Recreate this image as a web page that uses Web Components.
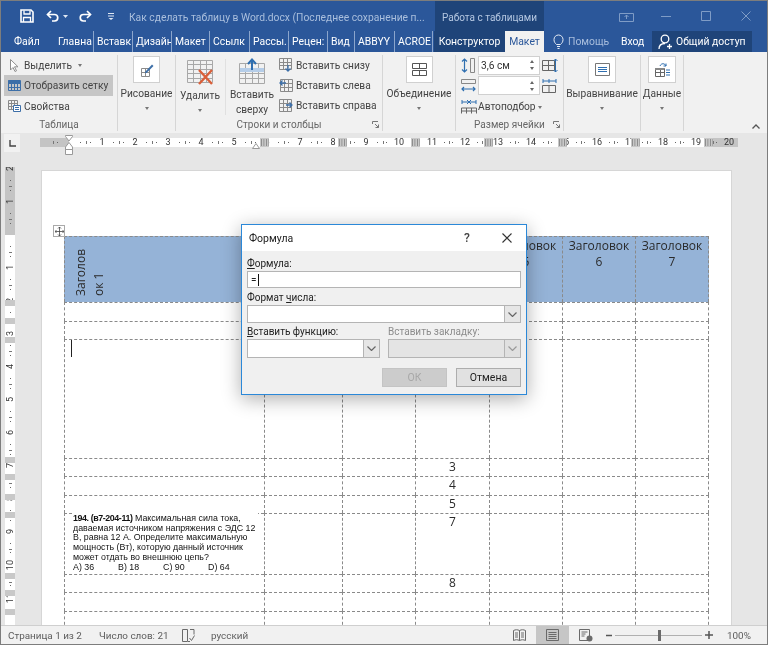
<!DOCTYPE html>
<html lang="ru">
<head>
<meta charset="utf-8">
<title>Формула</title>
<style>
  html, body { margin: 0; padding: 0; background: #e6e6e6; }
  body { width: 768px; height: 645px; overflow: hidden; font-family: Roboto, "Liberation Sans", sans-serif; }
</style>
</head>
<body>
<word-app>
  <title-bar></title-bar>
  <tab-strip></tab-strip>
  <ribbon-bar></ribbon-bar>
  <h-ruler></h-ruler>
  <doc-view></doc-view>
  <status-bar></status-bar>
  <formula-dialog slot="over"></formula-dialog>
</word-app>

<script>
// общий помощник для иконок
const svg = (w, h, body) => `<svg width="${w}" height="${h}" viewBox="0 0 ${w} ${h}" fill="none" style="display:block">${body}</svg>`;

// таблица-сетка для иконок ленты
const gridLines = (x, y, w, h, cols, rows, color) => {
  let d = `M${x}.5 ${y}.5h${w}v${h}h${-w}z`;
  for (let i = 1; i < cols; i++) d += `M${x + Math.round(w * i / cols)}.5 ${y}v${h}`;
  for (let i = 1; i < rows; i++) d += `M${x} ${y + Math.round(h * i / rows)}.5h${w}`;
  return `<path d="${d}" stroke="${color}"/>`;
};

class WordApp extends HTMLElement {
  constructor() {
    super();
    this.attachShadow({ mode: 'open' });
  }
  connectedCallback() {
    this.shadowRoot.innerHTML = `
      <style>
        :host {
          display: flex;
          flex-direction: column;
          position: relative;
          width: 768px;
          height: 645px;
          box-sizing: border-box;
          border: 1px solid #7d7d7d;
          overflow: hidden;
          background: #e6e6e6;
          filter: blur(.4px);
        }
      </style>
      <slot></slot>
      <slot name="over"></slot>
    `;
  }
}

class TitleBar extends HTMLElement {
  constructor() {
    super();
    this.attachShadow({ mode: 'open' });
  }
  connectedCallback() {
    const dim = '#7f9cc6';
    this.shadowRoot.innerHTML = `
      <style>
        :host {
          display: flex;
          height: 30px;
          background: #2b579a;
          color: #aabfdd;
          font-size: 10.300px;
        }
        .qat { display: flex; align-items: center; width: 128px; padding-left: 19px; box-sizing: border-box; flex: none; }
        .doc { width: 306px; flex: none; line-height: 34px; white-space: nowrap; }
        .ctx { width: 109px; flex: none; background: #1f4479; line-height: 34px; text-align: center; color: #b5c7e1; font-size: 10px; }
        .win { display: flex; flex: 1; align-items: center; padding-top: 0; }
        .win span { display: flex; justify-content: center; width: 40px; }
        .win span:first-child { margin-left: 62px; }
      </style>
      <div class="qat">
        ${svg(14, 14, `<path d="M1 1h10l2 2v10H1z" stroke="#fff" stroke-width="1.6"/><path d="M4 1.5v3.500h6V1.500" stroke="#fff" stroke-width="1.3"/><path d="M3.500 13V8.500h7V13" stroke="#fff" stroke-width="1.3"/>`)}
        <span style="width:12px"></span>
        ${svg(14, 12, `<path d="M5 1L1.500 4.500 5 8" stroke="#fff" stroke-width="1.700"/><path d="M2 4.500h6.500a3 3 0 0 1 0 6.500H6" stroke="#fff" stroke-width="1.700"/>`)}
        <span style="width:3px"></span>
        ${svg(5, 3, `<path d="M0 0h5L2.500 3z" fill="#dfe7f3"/>`)}
        <span style="width:10px"></span>
        ${svg(14, 12, `<path d="M9 1l3.500 3.500L9 8" stroke="#fff" stroke-width="1.700"/><path d="M12 4.500H5.500a3 3 0 0 0 0 6.500H8" stroke="#fff" stroke-width="1.700"/>`)}
        <span style="width:16px"></span>
        ${svg(6, 7, `<path d="M0 .5h6M0 3h6" stroke="#dfe7f3"/><path d="M.5 5h5L3 7z" fill="#dfe7f3"/>`)}
      </div>
      <div class="doc">Как сделать таблицу в Word.docx (Последнее сохранение п...</div>
      <div class="ctx">Работа с таблицами</div>
      <div class="win">
        <span>${svg(15, 11, `<path d="M.5 2.500h14v8H.5z" stroke="${dim}"/><path d="M7.500 8V4M5.500 6l2-2 2 2" stroke="${dim}"/>`)}</span>
        <span>${svg(10, 10, `<path d="M0 5.500h10" stroke="${dim}"/>`)}</span>
        <span>${svg(10, 10, `<path d="M.5.500h9v9h-9z" stroke="${dim}"/>`)}</span>
        <span>${svg(10, 10, `<path d="M.5.500l9 9M9.500.500l-9 9" stroke="${dim}"/>`)}</span>
      </div>
    `;
  }
}

class TabStrip extends HTMLElement {
  constructor() {
    super();
    this.attachShadow({ mode: 'open' });
  }
  connectedCallback() {
    // подпись и ширина вкладки (до правого разделителя)
    const tabs = [['Главна', 39], ['Вставк', 39], ['Дизайн', 39], ['Макет', 38], ['Ссылк', 40], ['Рассы.', 39], ['Рецен:', 39], ['Вид', 27], ['ABBYY', 40], ['ACROE', 38]];
    this.shadowRoot.innerHTML = `
      <style>
        :host {
          display: flex;
          height: 21px;
          background: #2b579a;
          color: #fff;
          font-size: 10.400px;
          line-height: 21px;
        }
        div { white-space: nowrap; overflow: hidden; flex: none; box-sizing: border-box; }
        .file { width: 54px; padding-left: 13px; }
        .tab { padding-left: 3px; border-right: 1px solid #8ba5cc; }
        .ctx { width: 71px; background: #1f4479; text-align: center; margin-left: 1px; }
        .active { width: 39px; background: #f1f1f1; color: #2b579a; text-align: center; }
        .help { display: flex; align-items: center; width: 77px; padding-left: 9px; gap: 4px; color: #a9bedd; }
        .login { width: 32px; }
        .share { display: flex; align-items: center; gap: 2px; width: 100px; background: #1f4479; padding-left: 6px; margin-left: -1px; }
      </style>
      <div class="file">Файл</div>
      ${tabs.map(([t, w]) => `<div class="tab" style="width:${w}px">${t}</div>`).join('')}
      <div class="ctx">Конструктор</div>
      <div class="active">Макет</div>
      <div class="help">${svg(11, 15, `<path d="M3.500 10.500C2 9 1 8 1 5.500a4.500 4.500 0 0 1 9 0c0 2.500-1 3.500-2.500 5zM4 12.500h3M4.500 14.500h2" stroke="#e6ecf5"/>`)}<span>Помощь</span></div>
      <div class="login">Вход</div>
      <div class="share">${svg(16, 16, `<circle cx="7" cy="5" r="3.800" stroke="#fff" stroke-width="1.300"/><path d="M1 15c0-3.500 2.500-5.500 6-5.500" stroke="#fff" stroke-width="1.300"/><path d="M11.500 10v5M9 12.500h5" stroke="#fff" stroke-width="1.300"/>`)}<span>Общий доступ</span></div>
    `;
  }
}

class RibbonGroup extends HTMLElement {
  constructor() {
    super();
    this.attachShadow({ mode: 'open' });
  }
  connectedCallback() {
    const launcher = this.hasAttribute('launcher');
    this.shadowRoot.innerHTML = `
      <style>
        :host {
          display: flex;
          flex-direction: column;
          box-sizing: border-box;
          height: 76px;
          margin-top: 3px;
          border-right: 1px solid #d6d6d6;
          flex: none;
        }
        .body { display: flex; height: 62px; }
        .foot { display: flex; justify-content: center; height: 14px; line-height: 16px; position: relative; color: #666; font-size: 10px; }
        .launch { position: absolute; right: 3px; top: 4px; }
      </style>
      <div class="body"><slot></slot></div>
      <div class="foot" style="padding-right:${this.getAttribute('shift') || 0}px">${this.getAttribute('label') || ''}
        ${launcher ? `<span class="launch">${svg(7, 7, `<path d="M.5 3V.5H6M.5 .5" stroke="#777"/><path d="M3 3l3.500 3.500M6.500 3.500v3h-3" stroke="#777"/>`)}</span>` : ''}
      </div>
    `;
  }
}

class BigButton extends HTMLElement {
  constructor() {
    super();
    this.attachShadow({ mode: 'open' });
  }
  connectedCallback() {
    const h = this.getAttribute('icon-h') || 31;
    const lines = this.getAttribute('label').split('|');
    this.shadowRoot.innerHTML = `
      <style>
        :host { display: flex; flex-direction: column; align-items: center; flex: none; color: #444; }
        .ic { display: flex; justify-content: center; height: ${h}px; }
        .t { line-height: 15px; text-align: center; white-space: nowrap; }
        .c { width: 0; height: 0; border: 2.500px solid transparent; border-top: 3px solid #777; margin-top: 6px; }
      </style>
      <div class="ic"><slot></slot></div>
      <div class="t">${lines.join('<br>')}</div>
      ${this.hasAttribute('caret') ? '<div class="c"></div>' : ''}
    `;
  }
}

class SmallButton extends HTMLElement {
  constructor() {
    super();
    this.attachShadow({ mode: 'open' });
  }
  connectedCallback() {
    this.shadowRoot.innerHTML = `
      <style>
        :host { display: flex; align-items: center; gap: 4px; height: 20px; color: #444; white-space: nowrap; box-sizing: border-box; }
        :host([on]) { background: #c6c6c6; }
        .c { width: 0; height: 0; border: 2.500px solid transparent; border-top: 3px solid #777; margin: 3px 0 0 1px; }
      </style>
      <slot></slot><span>${this.getAttribute('label')}</span>
      ${this.hasAttribute('caret') ? '<span class="c"></span>' : ''}
    `;
  }
}

class SpinField extends HTMLElement {
  constructor() {
    super();
    this.attachShadow({ mode: 'open' });
  }
  connectedCallback() {
    this.shadowRoot.innerHTML = `
      <style>
        :host { display: flex; align-items: center; justify-content: space-between; box-sizing: border-box; width: 62px; height: 19px; background: #fff; border: 1px solid #d0d0d0; padding: 0 5px 0 2px; color: #333; flex: none; }
        .s { display: flex; flex-direction: column; gap: 4px; }
        i { display: block; width: 0; height: 0; border: 2.500px solid transparent; }
        .u { border-bottom: 3px solid #666; border-top: 0; }
        .d { border-top: 3px solid #666; border-bottom: 0; }
      </style>
      <span>${this.getAttribute('value') || ''}</span>
      <span class="s"><i class="u"></i><i class="d"></i></span>
    `;
  }
}

class RibbonBar extends HTMLElement {
  constructor() {
    super();
    this.attachShadow({ mode: 'open' });
  }
  connectedCallback() {
    const blue = '#3d6fa8', g = '#8a8a8a';
    this.shadowRoot.innerHTML = `
      <style>
        :host {
          display: flex;
          height: 81px;
          background: #f1f1f1;
          font-size: 10.200px;
          color: #444;
          position: relative;
        }
        .box { width: 25px; height: 25px; background: #fff; border: 1px solid #d0d0d0; display: flex; align-items: center; justify-content: center; margin-top: 1px; }
        .col { display: flex; flex-direction: column; }
        .sep { width: 1px; height: 56px; background: #e0e0e0; margin: 4px 0 0 1px; flex: none; }
        .row { display: flex; align-items: center; height: 20.500px; gap: 2px; }
        .collapse { position: absolute; right: 7px; bottom: 4px; }
      </style>

      <ribbon-group label="Таблица" style="width:117px">
        <div class="col" style="width:109px;margin-left:3px">
          <small-button label="Выделить" caret style="padding-left:6px;gap:5px">${svg(9, 13, `<path d="M.5.500v10.500l2.500-2.500 2 4 1.500-.7-2-4h3.500z" stroke="#8f8f8f" fill="#fff"/>`)}</small-button>
          <small-button label="Отобразить сетку" on style="padding-left:4px;height:21px;gap:3px">${svg(13, 11, gridLines(0, 0, 12, 10, 4, 3, blue) + `<path d="M0 .5h12v2.500H0z" fill="${blue}"/>`)}</small-button>
          <small-button label="Свойства" style="padding-left:4px;gap:3px">${svg(13, 12, gridLines(0, 0, 9, 9, 3, 3, g) + `<path d="M5.500 5.500h7v6h-7z" fill="#fff" stroke="${blue}"/><path d="M7 7.500h4M7 9.500h4" stroke="${blue}"/>`)}</small-button>
        </div>
      </ribbon-group>

      <ribbon-group style="width:58px">
        <big-button label="Рисование" caret style="width:57px">
          <div class="box">${svg(14, 14, gridLines(1, 5, 8, 8, 2, 2, g) + `<path d="M5 9l7-7.500 1.500 1.500L6.500 10H5z" fill="${blue}"/>`)}</div>
        </big-button>
      </ribbon-group>

      <ribbon-group label="Строки и столбцы" launcher shift="0" style="width:207px">
        <big-button label="Удалить" caret icon-h="28" style="width:48px;padding-top:5px">
          ${svg(27, 26, gridLines(0, 0, 25, 22, 4, 5, '#a8a8a8') + `<path d="M12 10l13 14M25 10L12 24" stroke="#d9603a" stroke-width="2.400"/>`)}
        </big-button>
        <div class="sep"></div>
        <big-button label="Вставить|сверху" icon-h="30" style="width:52px;padding-top:3px">
          ${svg(27, 27, gridLines(0, 5, 25, 20, 4, 4, '#a8a8a8') + `<path d="M1 10h24v4H1z" fill="#b5cde8"/><path d="M13 12V2M9 6l4-4.500L17 6" stroke="#2f6fb0" stroke-width="2"/>`)}
        </big-button>
        <div class="col" style="margin-left:1px">
          <small-button label="Вставить снизу" style="gap:3px">${svg(14, 14, gridLines(0, 0, 12, 11, 3, 3, g) + `<path d="M9 7v6M6.500 10.500L9 13l2.500-2.500" stroke="${blue}" stroke-width="1.300"/>`)}</small-button>
          <small-button label="Вставить слева" style="gap:3px">${svg(14, 14, gridLines(1, 1, 12, 12, 3, 3, g) + `<path d="M7 5H1M3.500 2.500L1 5l2.500 2.500" stroke="${blue}" stroke-width="1.300"/>`)}</small-button>
          <small-button label="Вставить справа" style="gap:3px">${svg(14, 14, gridLines(0, 1, 12, 12, 3, 3, g) + `<path d="M7 7h6M10.500 4.500L13 7l-2.500 2.500" stroke="${blue}" stroke-width="1.300"/>`)}</small-button>
        </div>
      </ribbon-group>

      <ribbon-group style="width:73px">
        <big-button label="Объединение" caret style="width:72px">
          <div class="box">${svg(15, 15, `<path d="M.5 1.500h14v5H.5zM.5 8.500h14v5H.5zM7.500 1.500v5M7.500 8.500v5" stroke="#555"/>`)}</div>
        </big-button>
      </ribbon-group>

      <ribbon-group label="Размер ячейки" launcher style="width:108px">
        <div class="col" style="padding-left:5px">
          <div class="row" style="gap:2px;height:20px">
            ${svg(15, 15, `<path d="M3.500 1v13M1 3.500l2.500-2.500L6 3.500M1 11.500L3.500 14 6 11.500" stroke="#2f6fb0" stroke-width="1.200"/><path d="M9.500.5h4v14h-4z" stroke="#888"/>`)}
            <spin-field value="3,6 см"></spin-field>
            ${svg(16, 15, `<path d="M.5 2.500h12v10H.5zM6.500 2.500v10M.5 7.500h12" stroke="#666"/><path d="M13.500 1v13M11.500 3l2-2 2 2M11.500 12l2 2 2-2" stroke="#2f6fb0"/>`)}
          </div>
          <div class="row" style="gap:2px;height:21px">
            ${svg(15, 15, `<path d="M.5 1.500h14v4H.5z" stroke="#888"/><path d="M1 11h13M3 9l-2 2 2 2M12 9l2 2-2 2" stroke="#2f6fb0" stroke-width="1.200"/>`)}
            <spin-field></spin-field>
            ${svg(16, 15, `<path d="M.5 7.500h13v7H.5zM7 7.500v7" stroke="#666"/><path d="M1 3h13M1 1v4M7 1v4M14 1v4" stroke="#2f6fb0"/>`)}
          </div>
          <small-button label="Автоподбор" caret style="gap:1px;height:21px">${svg(16, 15, `<path d="M1 3h14M1 1v4M15 1v4M6 1l4 4M10 1L6 5" stroke="#2f6fb0"/><path d="M.5 9h15v5.500M.5 9v5.500M5.500 9v5.500M10.500 9v5.500M.5 12h15" stroke="#666"/>`)}</small-button>
        </div>
      </ribbon-group>

      <ribbon-group style="width:77px">
        <big-button label="Выравнивание" caret style="width:76px">
          <div class="box" style="width:26px">${svg(15, 13, `<path d="M.5.500h14v12H.5z" stroke="#777"/><path d="M3 4.500h9M3 6.500h9M3 8.500h9" stroke="#2f6fb0"/>`)}</div>
        </big-button>
      </ribbon-group>

      <ribbon-group style="width:43px">
        <big-button label="Данные" caret style="width:42px">
          <div class="box" style="width:26px">${svg(15, 15, gridLines(0, 6, 9, 8, 2, 2, '#666') + `<path d="M0 6h9v2H0z" fill="#888"/><path d="M5 4c1-3 5-3 6 0M11 4V1.500M11 4H8.500" stroke="#2f6fb0"/><path d="M11 8h4M11 10.500h4M11 13h4" stroke="#2f6fb0"/>`)}</div>
        </big-button>
      </ribbon-group>

      <span class="collapse">${svg(8, 5, `<path d="M.5 4.500L4 1l3.500 3.500" stroke="#555" stroke-width="1.300"/>`)}</span>
    `;
  }
}

class HRuler extends HTMLElement {
  constructor() {
    super();
    this.attachShadow({ mode: 'open' });
  }
  connectedCallback() {
    let cells = '';
    for (let n = 0; n <= 20; n++) {
      cells += `<div class="cell"><i></i><b>${n === 0 ? '' : n}</b><i></i></div>`;
    }
    const markers = [264, 342, 415, 488, 562, 635, 708];
    this.shadowRoot.innerHTML = `
      <style>
        :host { display: flex; height: 34px; background: #e6e6e6; box-sizing: border-box; padding: 1px 0 0 3px; }
        .corner { width: 16px; height: 18px; background: #f1f1f1; display: flex; align-items: center; justify-content: center; flex: none; }
        .track {
          position: relative;
          display: flex;
          flex: none;
          width: 698px;
          height: 9px;
          margin: 4px 0 0 20px;
          padding-left: 12.500px;
          box-sizing: border-box;
          overflow: visible;
          background: linear-gradient(90deg, #c4c4c4 0 29px, #fff 29px 665px, #c4c4c4 665px);
          font-size: 9px;
          line-height: 9px;
          color: #333;
        }
        .cell { display: flex; flex: none; width: 33px; height: 9px; justify-content: space-around; align-items: center; background: linear-gradient(#777, #777) 0 50% / 1px 3px no-repeat; }
        .cell b { font-weight: 400; text-align: center; min-width: 3px; }
        .cell i { display: block; width: 1px; height: 1px; background: #666; }
        .cells { display: flex; overflow: hidden; width: 685.500px; }
        .mark { position: absolute; top: 0; width: 9px; height: 9px; background: #c8c8c8 linear-gradient(90deg, #888 1px, transparent 1px) 0 0 / 2.500px 7px repeat-x; background-position: 1px 1px; }
        .indent { position: absolute; left: 25px; top: -3px; }
        .right { position: absolute; left: 212px; top: 5px; }
      </style>
      <div class="corner">${svg(7, 7, `<path d="M1 0v6h6" stroke="#444" stroke-width="1.400"/>`)}</div>
      <div class="track">
        <div class="cells">${cells}</div>
        ${markers.map(x => `<span class="mark" style="left:${x - 44.500}px"></span>`).join('')}
        <span class="indent">${svg(9, 20, `<path d="M.5.500h7v1L4 6 .5 1.500zM4 7.500L.5 12v2.500h7V12zM.5 14.500h7v5h-7z" fill="#fff" stroke="#999"/>`)}</span>
        <span class="right">${svg(8, 6, `<path d="M.5 5.500L4 .5l3.500 5z" fill="#fff" stroke="#999"/>`)}</span>
      </div>
    `;
  }
}

class VRuler extends HTMLElement {
  constructor() {
    super();
    this.attachShadow({ mode: 'open' });
  }
  connectedCallback() {
    let cells = '';
    for (let n = -2; n <= 11; n++) {
      cells += `<div class="cell"><i></i><b>${n === 0 ? '' : Math.abs(n)}</b><i></i></div>`;
    }
    const marks = [303, 321, 340, 460, 477, 497, 515, 576, 593, 612];
    this.shadowRoot.innerHTML = `
      <style>
        :host {
          display: block;
          position: relative;
          width: 10px;
          height: 458px;
          flex: none;
          overflow: hidden;
          margin-left: 4px;
          background: linear-gradient(#c4c4c4 0 68px, #fff 68px);
          font-size: 9px;
          color: #333;
        }
        .cells { margin-top: -14.500px; }
        .cell { display: flex; flex-direction: column; align-items: center; justify-content: space-around; height: 33px; background: linear-gradient(#777, #777) 50% 0 / 3px 1px no-repeat; }
        .cell i { display: block; width: 1px; height: 1px; background: #666; }
        .cell b { font-weight: 400; writing-mode: vertical-rl; transform: rotate(180deg); line-height: 10px; min-height: 3px; }
        .mark { position: absolute; left: 0; width: 10px; height: 6px; background: #c8c8c8; }
      </style>
      <div class="cells">${cells}</div>
      ${marks.map(y => `<span class="mark" style="top:${y - 167 - 3}px"></span>`).join('')}
    `;
  }
}

class DocTable extends HTMLElement {
  constructor() {
    super();
    this.attachShadow({ mode: 'open' });
  }
  connectedCallback() {
    const cols = [200, 78, 73, 74, 73, 73, 74];
    const rows = [66, 19, 18, 119, 18, 19, 18, 61, 18, 19, 30];
    const center = { 4: '3', 5: '4', 6: '5', 7: '7', 8: '8' };
    // заголовки 2-4 закрыты диалогом
    const heads = ['', '', '', '', 'Заголовок<br>5', 'Заголовок<br>6', 'Заголовок<br>7'];
    let html = '';
    rows.forEach((_, r) => {
      cols.forEach((_, c) => {
        let cls = 'c';
        let inner = '';
        if (r === 0) {
          cls += ' head';
          inner = c === 0 ? '<div class="rot">Заголов<br>ок 1</div>' : heads[c];
        }
        if (r === 3 && c === 0) inner = '<span class="caret"></span>';
        if (r === 7 && c === 0) {
          inner = `<div class="scan"><b>194. (в7-204-11)</b> Максимальная сила тока,<br>даваемая источником напряжения с ЭДС 12<br>В, равна 12 А. Определите максимальную<br>мощность (Вт), которую данный источник<br>может отдать во внешнюю цепь?
            <div class="ans"><span>А) 36</span><span>В) 18</span><span>С) 90</span><span>D) 64</span></div></div>`;
        }
        if (c === 3 && center[r]) inner = center[r];
        html += `<div class="${cls}">${inner}</div>`;
      });
    });
    this.shadowRoot.innerHTML = `
      <style>
        :host {
          display: grid;
          grid-template-columns: ${cols.map(v => v + 'px').join(' ')};
          grid-template-rows: ${rows.map(v => v + 'px').join(' ')};
          position: relative;
          width: max-content;
          font-family: "Open Sans", Roboto, sans-serif;
          font-size: 12px;
          color: #2a2a2a;
          line-height: 15px;
        }
        .c { border-top: 1px dashed #8a8a8a; border-left: 1px dashed #8a8a8a; box-sizing: border-box; text-align: center; min-width: 0; }
        .c:nth-child(7n+1) { border-right: 1px dashed #8a8a8a; }
        .head { background: #95b3d7; padding-top: 1px; line-height: 16px; }
        .rot { writing-mode: vertical-rl; transform: rotate(180deg); height: 47px; width: 36px; margin: 11px 0 0 7px; text-align: left; line-height: 18px; white-space: nowrap; }
        .caret { display: block; width: 1px; height: 17px; background: #222; margin: 0 0 0 6px; }
        .scan {
          width: 186px;
          height: 59px;
          margin: -1px 0 0 7px;
          padding: 1px 0 0 1px;
          box-sizing: border-box;
          background: #fff;
          font-family: "Liberation Sans", sans-serif;
          font-size: 8.850px;
          line-height: 9.700px;
          text-align: left;
          color: #111;
          white-space: nowrap;
        }
        .scan b { letter-spacing: -.4px; }
        .ans { display: flex; }
        .ans span { width: 45px; }
        .move { position: absolute; left: -11px; top: -11px; width: 10px; height: 10px; border: 1px solid #aaa; background: #fff; display: flex; align-items: center; justify-content: center; }
      </style>
      ${html}
      <span class="move">${svg(9, 9, `<path d="M4.500 0v9M0 4.500h9M3 1.500L4.500 0 6 1.500M3 7.500L4.500 9 6 7.500M1.500 3L0 4.500 1.500 6M7.500 3L9 4.500 7.500 6" stroke="#444" stroke-width=".8"/>`)}</span>
    `;
  }
}

class DocView extends HTMLElement {
  constructor() {
    super();
    this.attachShadow({ mode: 'open' });
  }
  connectedCallback() {
    this.shadowRoot.innerHTML = `
      <style>
        :host { display: flex; height: 458px; overflow: hidden; background: #e6e6e6; }
        .page {
          width: 691px;
          height: 600px;
          flex: none;
          box-sizing: border-box;
          margin: 3px 0 0 26px;
          padding: 65px 0 0 22px;
          background: #fff;
          border: 1px solid #d6d6d6;
          border-width: 1px 1px 0 1px;
        }
      </style>
      <v-ruler></v-ruler>
      <div class="page"><doc-table></doc-table></div>
    `;
  }
}

class FormulaDialog extends HTMLElement {
  constructor() {
    super();
    this.attachShadow({ mode: 'open' });
  }
  connectedCallback() {
    const arrow = c => svg(9, 5, `<path d="M.5.500L4.500 4.500 8.500.500" stroke="${c}" stroke-width="1.200"/>`);
    this.shadowRoot.innerHTML = `
      <style>
        :host {
          position: absolute;
          left: 240px;
          top: 223px;
          width: 286px;
          height: 171px;
          box-sizing: border-box;
          display: flex;
          flex-direction: column;
          background: #f0f0f0;
          border: 1px solid #2b88d8;
          box-shadow: 0 4px 18px rgba(0,0,0,.32);
          font-size: 10px;
          color: #222;
        }
        .top { display: flex; align-items: center; height: 26px; background: #fff; padding-left: 7px; flex: none; }
        .top .name { flex: 1; font-size: 10.500px; }
        .top .q { width: 40px; text-align: center; font-size: 12px; font-weight: 500; color: #444; }
        .top .x { width: 39px; display: flex; justify-content: center; }
        .body { padding: 6px 5px 0 5px; display: flex; flex-direction: column; }
        label { display: block; height: 14px; line-height: 14px; color: #222; white-space: nowrap; }
        label.off { color: #8c8c8c; }
        u { text-decoration: underline; }
        .in { height: 17px; background: #fff; border: 1px solid #b4b4b4; box-sizing: border-box; display: flex; align-items: center; padding-left: 3px; font-size: 10px; margin-bottom: 3px; }
        .in i { display: block; width: 1px; height: 12px; background: #111; margin-left: 1px; }
        .sel { height: 18px; background: #fff; border: 1px solid #b4b4b4; box-sizing: border-box; display: flex; justify-content: flex-end; margin-bottom: 2px; }
        .sel.off { background: #e4e4e4; }
        .sel span { width: 15px; background: #e6e6e6; border-left: 1px solid #b4b4b4; display: flex; align-items: center; justify-content: center; }
        .sel.off span { background: #e0e0e0; }
        .two { display: grid; grid-template-columns: 133px 133px; column-gap: 8px; }
        .two .sel { height: 19px; }
        .btns { display: flex; justify-content: flex-end; gap: 9px; margin-top: 8px; }
        .btn { width: 65px; height: 19px; box-sizing: border-box; background: #e1e1e1; border: 1px solid #adadad; text-align: center; line-height: 17px; font-size: 10.500px; color: #222; }
        .btn.off { background: #cccccc; border-color: #c4c4c4; color: #a8a8a8; }
      </style>
      <div class="top">
        <span class="name">Формула</span>
        <span class="q">?</span>
        <span class="x">${svg(10, 10, `<path d="M.5.500l9 9M9.500.500l-9 9" stroke="#333" stroke-width="1.100"/>`)}</span>
      </div>
      <div class="body">
        <label><u>Ф</u>ормула:</label>
        <div class="in">=<i></i></div>
        <label>Формат <u>ч</u>исла:</label>
        <div class="sel"><span>${arrow('#666')}</span></div>
        <div class="two">
          <div>
            <label><u>В</u>ставить функцию:</label>
            <div class="sel"><span>${arrow('#666')}</span></div>
          </div>
          <div>
            <label class="off">Вставить закладку:</label>
            <div class="sel off"><span>${arrow('#999')}</span></div>
          </div>
        </div>
        <div class="btns">
          <div class="btn off">ОК</div>
          <div class="btn">Отмена</div>
        </div>
      </div>
    `;
  }
}

class StatusBar extends HTMLElement {
  constructor() {
    super();
    this.attachShadow({ mode: 'open' });
  }
  connectedCallback() {
    const c = '#6a6a6a';
    this.shadowRoot.innerHTML = `
      <style>
        :host { display: flex; align-items: center; height: 19px; box-sizing: border-box; background: #f1f1f1; border-top: 1px solid #cfcfcf; color: #5c5c5c; font-size: 9.900px; padding-left: 7px; white-space: nowrap; }
        .a { width: 91px; flex: none; }
        .b { width: 83px; flex: none; }
        .ic { width: 29px; flex: none; }
        .lang { width: 302px; flex: none; }
        .read { width: 23px; flex: none; }
        .on { display: flex; align-items: center; justify-content: center; width: 33px; height: 18px; background: #c6c6c6; flex: none; }
        .web { width: 13px; margin: 0 14px 0 10px; flex: none; }
        .zoom { display: flex; align-items: center; flex: none; width: 107px; height: 100%; position: relative; }
        .line { width: 87px; height: 1px; background: #b0b0b0; margin: 0 3px; position: relative; }
        .thumb { position: absolute; left: 43px; top: -5px; width: 3px; height: 11px; background: #6a6a6a; }
        .pct { margin-left: 14px; }
      </style>
      <span class="a">Страница 1 из 2</span>
      <span class="b">Число слов: 21</span>
      <span class="ic">${svg(13, 13, `<path d="M.5.500h5v12h-5zM8 12.500H6M8 .500h4v5" stroke="${c}"/><path d="M7.500 9l2 2.500 3-5" stroke="${c}"/>`)}</span>
      <span class="lang">русский</span>
      <span class="read">${svg(13, 13, `<path d="M.5 1.500c2-1 4-1 6 0 2-1 4-1 6 0v10c-2-1-4-1-6 0-2-1-4-1-6 0zM6.500 1.500v10M2 4h3M2 6h3M2 8h3M8 4h3M8 6h3M8 8h3" stroke="${c}"/>`)}</span>
      <span class="on">${svg(13, 12, `<path d="M.5.500h12v11H.5zM2.500 3.500h8M2.500 5.500h8M2.500 7.500h8M2.500 9.500h8" stroke="${c}"/>`)}</span>
      <span class="web">${svg(14, 13, `<path d="M.5.500h10v11H.5zM2.500 3h6M2.500 5h4M2.500 7h3" stroke="${c}"/><circle cx="10.500" cy="9.500" r="3" fill="${c}"/>`)}</span>
      <span class="zoom">
        ${svg(6, 3, `<path d="M0 1.500h6" stroke="#555" stroke-width="1.500"/>`)}
        <span class="line"><span class="thumb"></span></span>
        ${svg(8, 8, `<path d="M0 4h8M4 0v8" stroke="#555" stroke-width="1.500"/>`)}
      </span>
      <span class="pct">100%</span>
    `;
  }
}

customElements.define('word-app', WordApp);
customElements.define('title-bar', TitleBar);
customElements.define('tab-strip', TabStrip);
customElements.define('ribbon-group', RibbonGroup);
customElements.define('big-button', BigButton);
customElements.define('small-button', SmallButton);
customElements.define('spin-field', SpinField);
customElements.define('ribbon-bar', RibbonBar);
customElements.define('h-ruler', HRuler);
customElements.define('v-ruler', VRuler);
customElements.define('doc-table', DocTable);
customElements.define('doc-view', DocView);
customElements.define('formula-dialog', FormulaDialog);
customElements.define('status-bar', StatusBar);
</script>
</body>
</html>
